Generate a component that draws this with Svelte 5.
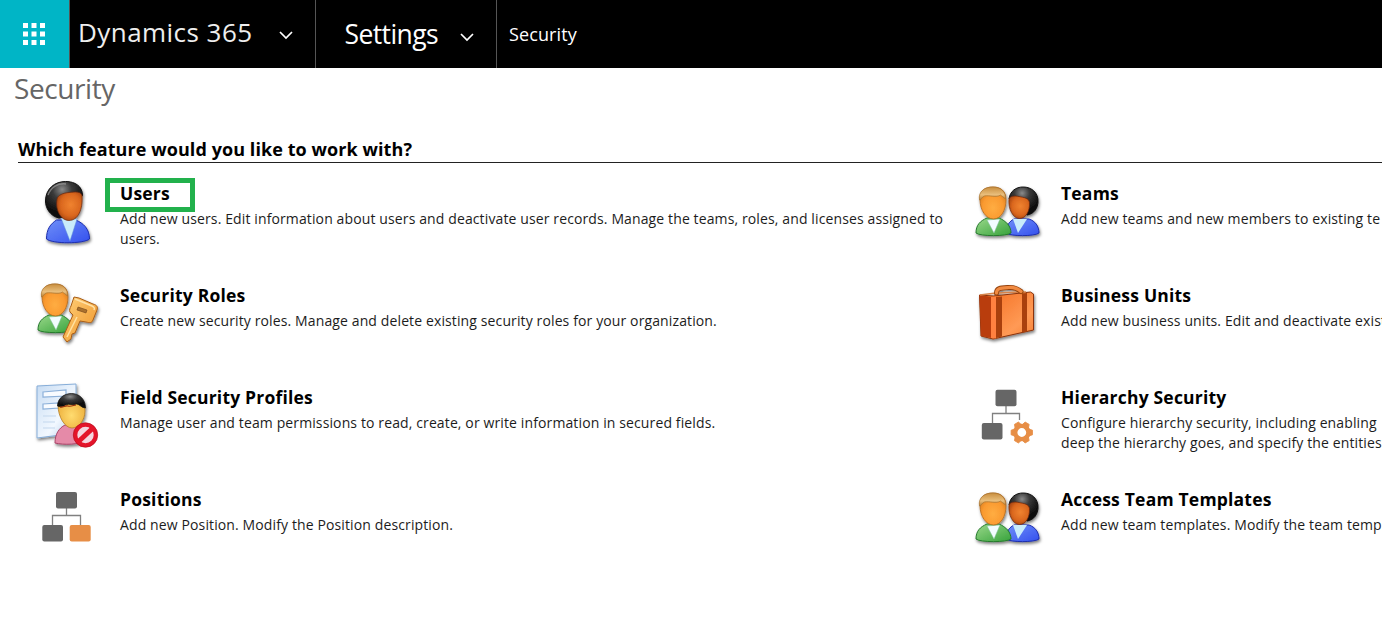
<script>
  const columns = [
    [
      { icon: 'user', box: '0 0 80 80', title: 'Users', marked: true, lines: ['Add new users. Edit information about users and deactivate user records. Manage the teams, roles, and licenses assigned to', 'users.'] },
      { icon: 'roles', box: '0 -3 80 80', title: 'Security Roles', lines: ['Create new security roles. Manage and delete existing security roles for your organization.'] },
      { icon: 'field', box: '0 -4 80 80', title: 'Field Security Profiles', lines: ['Manage user and team permissions to read, create, or write information in secured fields.'] },
      { icon: 'positions', box: '0 -4 80 80', title: 'Positions', lines: ['Add new Position. Modify the Position description.'] }
    ],
    [
      { icon: 'teams', box: '3 -5 80 80', title: 'Teams', lines: ['Add new teams and new members to existing te'] },
      { icon: 'case', box: '3 -3 80 80', title: 'Business Units', lines: ['Add new business units. Edit and deactivate exist'] },
      { icon: 'hierarchy', box: '3 -6 80 80', title: 'Hierarchy Security', lines: ['Configure hierarchy security, including enabling', 'deep the hierarchy goes, and specify the entities'] },
      { icon: 'teams', box: '3 -5 80 80', title: 'Access Team Templates', lines: ['Add new team templates. Modify the team temp'] }
    ]
  ];
</script>

<svg class="defs" width="0" height="0" aria-hidden="true">
  <defs>
    <filter id="shadow" x="-20%" y="-20%" width="150%" height="150%">
      <feDropShadow dx="1" dy="2" stdDeviation="1.5" flood-color="#000" flood-opacity=".5" />
    </filter>
    <radialGradient id="skin" cx=".5" cy=".65" r=".65"><stop offset="0" stop-color="#ffad42" /><stop offset=".6" stop-color="#fa9a30" /><stop offset="1" stop-color="#d87a1d" /></radialGradient>
    <radialGradient id="dark" cx=".55" cy=".45" r=".65"><stop offset="0" stop-color="#f08330" /><stop offset=".6" stop-color="#da671e" /><stop offset="1" stop-color="#9c3e0e" /></radialGradient>
    <radialGradient id="yellow" cx=".5" cy=".6" r=".65"><stop offset="0" stop-color="#ffdc70" /><stop offset="1" stop-color="#eaa935" /></radialGradient>
    <linearGradient id="blond" x2="0" y2="1"><stop offset="0" stop-color="#c98e3e" /><stop offset=".6" stop-color="#e9bf7d" /><stop offset="1" stop-color="#b87a2c" /></linearGradient>
    <radialGradient id="black" cx=".45" cy=".22" r=".65"><stop offset="0" stop-color="#8a8a8a" /><stop offset=".4" stop-color="#3a3a3a" /><stop offset="1" stop-color="#0b0b0b" /></radialGradient>
    <linearGradient id="green" x2="1" y2="1"><stop offset="0" stop-color="#9ad88a" /><stop offset="1" stop-color="#36a23b" /></linearGradient>
    <linearGradient id="blue" x2="1" y2="1"><stop offset="0" stop-color="#6f8ff8" /><stop offset="1" stop-color="#3450ee" /></linearGradient>
    <linearGradient id="gold" x2="1" y2="1"><stop offset="0" stop-color="#ffd07a" /><stop offset="1" stop-color="#ee9327" /></linearGradient>
    <linearGradient id="leather" x2="1" y2="1"><stop offset="0" stop-color="#f26a1d" /><stop offset=".7" stop-color="#ff9a55" /><stop offset="1" stop-color="#f58035" /></linearGradient>
    <linearGradient id="paper" x2="1" y2="1"><stop offset="0" stop-color="#c7dcf3" /><stop offset=".6" stop-color="#f2f8ff" /><stop offset="1" stop-color="#a9c6e8" /></linearGradient>
  </defs>
</svg>

{#snippet blondPerson()}
  <path d="M8 58c0-8 4-12 11-15h12c7 3 12 8 12 15-4 3.500-31 3.500-35 0Z" fill="url(#green)" stroke="#257a2c" />
  <path d="m19 45 7 13 6-14Z" fill="#f2fcff" stroke="#7fbf9a" stroke-width=".5" />
  <path d="M12 25c0-10 5-13 13-13s13 4 13 13c0 10-5 19-12.500 19S12 35 12 25Z" fill="url(#skin)" stroke="#b36a20" stroke-width=".8" />
  <path d="M11.500 25C10 16 17 12 25 12c8 0 13 5 12.500 12-2-2-4-3-5-4-4 3-11 0-16 1-3 1-3 4-5 4Z" fill="url(#blond)" stroke="#a97533" stroke-width=".7" />
{/snippet}

{#snippet icon(name)}
  {#if name === 'user'}
    <g filter="url(#shadow)">
      <path d="M16.500 69c0-10 4-15 10-19h19c8 3 14 9 14 19-6 5-37 5-43 0Z" fill="url(#blue)" stroke="#1c2dac" />
      <path d="m31 48 9 23 7-22Z" fill="#c9ecfb" stroke="#5c8fd8" stroke-width=".5" />
      <path d="M29 48C20 46 15.500 38 15.500 31c0-12 9-19.500 20-19.500 10 0 17 5 17 14L34 47Z" fill="url(#black)" stroke="#111" />
      <path d="M27 29c1-4 6-6 12-6.500 7-1 12-1 13 3 1 14-4 25-13 25-8 0-14-10-12-21.500Z" fill="url(#dark)" stroke="#6b2509" stroke-width=".7" />
      <path d="M18 25c3-8 10-12 18-11" fill="none" stroke="#aaa" stroke-width="1.500" opacity=".6" />
    </g>
  {:else if name === 'teams'}
    <g filter="url(#shadow)">
      <path d="M38 58c0-8 4-12 8-14h15c6 2 10 7 10 14-4 3.500-29 3.500-33 0Z" fill="url(#blue)" stroke="#1c2dac" />
      <path d="m45 44 5 14 9-14Z" fill="#c9ecfb" />
      <path d="M41 24c1-8 7-12 14-12 9 0 15 6 15 14 0 7-4 13-11 14Z" fill="url(#black)" stroke="#111" />
      <path d="M41 24c1-3 5-3.500 10-2.500s10 1.500 10.500 6C62 36 58 43.500 51.500 43.500S40 34 41 24Z" fill="url(#dark)" stroke="#6b2509" stroke-width=".7" />
      {@render blondPerson()}
    </g>
  {:else if name === 'roles'}
    <g filter="url(#shadow)">
      <g transform="translate(0 -3)">{@render blondPerson()}</g>
      <path d="m44 22 5 1 14 6c4 1 5 3 4 6l-4 10c-1 3-3 3-7 2l-6-1-5 12-3 1-1 5-4 3-4-5 10-22-3-3c-1-2 0-4 1-6Z" fill="url(#gold)" stroke="#a85d16" />
      <path d="m45 24 17 7c2 1 3 2 2 4" fill="none" stroke="#ffe2a8" stroke-width="1.500" />
      <path d="m48 32 9 3-1 3-9-3Z" fill="#a9702d" stroke="#76471a" stroke-width=".6" />
      <path d="m47 42-10 20" fill="none" stroke="#ffe1a0" stroke-width="1.500" />
    </g>
  {:else if name === 'field'}
    <g filter="url(#shadow)">
      <path d="m7 8 39-2v49L7 60Z" fill="url(#paper)" stroke="#86add8" />
      <path d="m13 14 23-2v6l-23 1Zm0 12 16-1v5l-16 1Z" fill="#f8fbff" stroke="#8db1da" stroke-width="1.200" />
      <path d="M13 38h13m-13 6h12m-12 6h12" stroke="#c3d7ed" />
      <path d="M25 65c0-9 4-15 10-18h12c7 3 10 8 10 15-7 5-24 5-32 3Z" fill="#e58aa8" stroke="#a94468" />
      <path d="M28 27c3-8 9-9 15-8 8 1 12 6 12 14 0 9-6 17-13 17S28 39 28 27Z" fill="url(#yellow)" stroke="#aa7420" stroke-width=".7" />
      <path d="M27.500 28c0-8 7-12.500 14-12.500s14 5 14 14.500c-4 0-6-4-9-4-4 2-7-1-11 1-3 2-6 2-8 1Z" fill="url(#black)" stroke="#111" stroke-width=".7" />
      <path d="M30 29c3 1 5-2 8-1s6-1 8-1" fill="none" stroke="#9a2e0b" stroke-width="1.200" />
    </g>
    <circle cx="55.500" cy="57" r="10.200" fill="#f4d5df" stroke="#e4142a" stroke-width="4" />
    <path d="m48 64 15-14" stroke="#e4142a" stroke-width="5" />
    <circle cx="55.500" cy="57" r="12.200" fill="none" stroke="#b90c1b" stroke-width=".7" />
  {:else if name === 'case'}
    <g filter="url(#shadow)">
      <path d="m11.500 20 14 1 37-4 3 2v36L25 64l-12-3Z" fill="url(#leather)" stroke="#8b330a" />
      <path d="m11.500 20 12 2v41l-10.500-2Z" fill="#b93c08" />
      <path d="m23 22 5-.5v42l-5-.5Z" fill="#ff8140" />
      <path d="m28 22 6-.5v40l-6 1.500ZM54 18.500l5-.5v38.500L54 57.500Z" fill="#a94008" />
      <path d="m12 20 16-2 30-1" fill="none" stroke="#d78349" stroke-width="1.500" />
      <path d="M28.500 18c0-5 4-5 12-5.500 6-.5 9 1 12.500 4" fill="none" stroke="#96430d" stroke-width="5" stroke-linecap="round" />
      <path d="M28.500 18c0-5 4-5 12-5.500 6-.5 9 1 12.500 4" fill="none" stroke="#f08a42" stroke-width="3.200" stroke-linecap="round" />
    </g>
  {:else if name === 'positions'}
    <path d="M36.500 28v8M22.500 45v-9.500h28V45" fill="none" stroke="#808080" stroke-width="1.300" />
    <rect x="26" y="12" width="21" height="16.500" rx="2" fill="#666" />
    <rect x="12.300" y="45" width="20.700" height="16.500" rx="2" fill="#666" />
    <rect x="39.700" y="45" width="21" height="16.500" rx="2" fill="#e78e46" />
  {:else}
    <path d="M38 26v8M24.500 43v-9.500h27V40" fill="none" stroke="#808080" stroke-width="1.300" />
    <rect x="27.500" y="9.800" width="21" height="16.500" rx="2" fill="#666" />
    <rect x="13.800" y="43" width="20.700" height="16.500" rx="2" fill="#666" />
    <circle cx="53.800" cy="52.500" r="6.600" fill="none" stroke="#e78e46" stroke-width="4.400" />
    {#each [0, 60, 120, 180, 240, 300] as angle}
      <path d="m61 49 3.500 1.200v4.600l-3.500 1.200Z" fill="#e78e46" stroke="#e78e46" stroke-width=".8" transform="rotate({angle} 53.800 52.500)" />
    {/each}
  {/if}
{/snippet}

{#snippet chevron()}
  <svg class="chevron" width="14" height="9" viewBox="0 0 14 9"><path d="m1 1 6 6 6-6" fill="none" stroke="#fff" stroke-width="1.700" /></svg>
{/snippet}

<div class="page">
  <header>
    <div class="launcher">
      <svg width="22" height="22" viewBox="0 0 22 22" fill="#fff">
        {#each [0, 8.500, 17] as y}{#each [0, 8.500, 17] as x}<rect {x} {y} width="5" height="5" />{/each}{/each}
      </svg>
    </div>
    <div class="brand"><span>Dynamics 365</span>{@render chevron()}</div>
    <div class="area"><span>Settings</span>{@render chevron()}</div>
    <div class="crumb"><span>Security</span></div>
  </header>
  <h1><span>Security</span></h1>
  <h2><span>Which feature would you like to work with?</span></h2>
  <main>
    {#each columns as column}
      <section>
        {#each column as item}
          <article>
            <svg width="80" height="80" viewBox={item.box}>{@render icon(item.icon)}</svg>
            <div class="copy">
              <h3 class:marked={item.marked}><span>{item.title}</span></h3>
              {#each item.lines as line}<p><span>{line}</span></p>{/each}
            </div>
          </article>
        {/each}
      </section>
    {/each}
  </main>
</div>

<style>
  :global(body) { background: #fff; overflow: hidden; }
  .page { width: 1382px; height: 636px; overflow: hidden; background: #fff; color: #000; font-family: "Open Sans", "Noto Sans", sans-serif; white-space: nowrap; }
  .defs { position: absolute; }
  header { display: flex; height: 68px; background: #000; color: #fff; }
  header > div { box-sizing: border-box; display: flex; align-items: center; border-right: 1px solid #555; }
  header .launcher { width: 70px; background: #00b5c6; padding-left: 23px; }
  .brand { width: 246px; padding: 0 22px 4px 8px; justify-content: space-between; font-size: 26px; letter-spacing: .45px; color: #eee; }
  .area { width: 181px; padding: 0 22px 1px 28.500px; justify-content: space-between; font-size: 26.500px; letter-spacing: -.6px; }
  .chevron { position: relative; top: 3.500px; }
  header .crumb { padding-left: 12px; border: 0; font-size: 18px; letter-spacing: .1px; }
  h1, h2, h3, p { margin: 0; font-weight: 400; }
  h1 { height: 68px; padding-left: 14px; box-sizing: border-box; font-size: 28px; line-height: 41px; letter-spacing: -.4px; color: #666; }
  h2 { height: 27px; box-sizing: border-box; margin-left: 18px; border-bottom: 1px solid #222; font-size: 18px; line-height: 26px; letter-spacing: .08px; font-weight: 700; }
  main { display: grid; grid-template-columns: 941px 941px; padding: 7px 0 0 30px; }
  article { display: flex; height: 102px; }
  article > svg { flex: none; width: 80px; margin-right: 10px; }
  .copy { padding-top: 10px; }
  h3 { position: relative; height: 29px; font-size: 17.500px; line-height: 26px; letter-spacing: .2px; font-weight: 700; }
  .marked::after { content: ""; position: absolute; left: -15px; top: -2px; box-sizing: border-box; width: 90px; height: 34px; border: 5px solid #22b14c; }
  p { height: 20px; font-size: 14px; line-height: 20px; letter-spacing: .12px; color: #1c1c1c; }
</style>
